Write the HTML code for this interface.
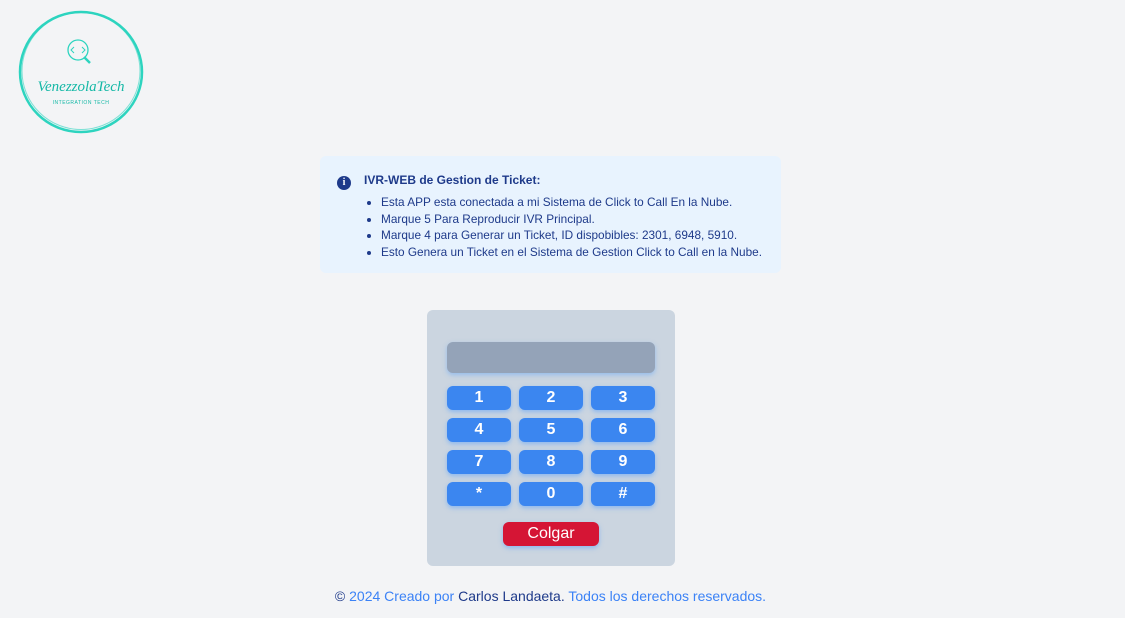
<!DOCTYPE html>
<html><head><meta charset="utf-8"><style>
*{margin:0;padding:0;box-sizing:border-box}
body{width:1125px;height:618px;background:#f3f4f6;font-family:"Liberation Sans",sans-serif;position:relative;overflow:hidden}
.logo{position:absolute;left:17px;top:9px;width:128px;height:126px}
.info{position:absolute;left:320px;top:156px;width:461px;height:117px;background:#e8f3fe;border-radius:6px;color:#1e3a8a}
.info .ic{position:absolute;left:17px;top:20px;width:14px;height:14px;border-radius:50%;background:#1e3a8a;color:#fff;font:bold 10px "Liberation Serif",serif;text-align:center;line-height:14px}
.info h4{position:absolute;left:44px;top:17px;font-size:12px;font-weight:bold}
.info ul{position:absolute;left:61px;top:38px;font-size:11.8px;line-height:16.5px}
.pad{position:absolute;left:427px;top:310px;width:248px;height:256px;background:#cbd5e0;border-radius:6px}
.disp{position:absolute;left:20px;top:32px;width:208px;height:31px;background:#94a3b8;border-radius:6px;box-shadow:0 2px 5px rgba(96,165,250,.5)}
.b{position:absolute;width:64px;height:24px;background:#3b86f0;border-radius:6px;color:#fff;font-weight:bold;font-size:16px;text-align:center;line-height:24px;box-shadow:0 2px 5px rgba(96,165,250,.6)}
.c{position:absolute;left:76px;top:212px;width:96px;height:24px;background:#d51535;border-radius:6px;color:#fff;font-size:16px;text-align:center;line-height:24px;box-shadow:0 2px 5px rgba(96,165,250,.6)}
.foot{position:absolute;left:0;width:1101px;top:588px;text-align:center;font-size:14px;color:#3b82f6}
.foot span{color:#1e3a8a}
</style></head><body>
<svg class="logo" viewBox="0 0 128 126">
<ellipse cx="64" cy="63" rx="61" ry="60" fill="none" stroke="#2dd4bf" stroke-width="2.5"/>
<ellipse cx="64" cy="62" rx="59" ry="58.5" fill="none" stroke="#2dd4bf" stroke-width="1" opacity=".6"/>
<circle cx="61" cy="41" r="10" fill="none" stroke="#2dd4bf" stroke-width="1.3"/>
<path d="M67 48 L73 54" stroke="#2dd4bf" stroke-width="2.5"/>
<path d="M57 38 l-3 3 3 3 M65 38 l3 3 -3 3" fill="none" stroke="#2dd4bf" stroke-width="1"/>
<text x="64" y="82" text-anchor="middle" font-family="Liberation Serif" font-style="italic" font-size="15" fill="#14b8a6">VenezzolaTech</text>
<text x="64" y="95" text-anchor="middle" font-family="Liberation Sans" font-size="5" fill="#14b8a6" letter-spacing=".5">INTEGRATION TECH</text>
</svg>
<div class="info"><div class="ic">i</div><h4>IVR-WEB de Gestion de Ticket:</h4>
<ul><li>Esta APP esta conectada a mi Sistema de Click to Call En la Nube.</li><li>Marque 5 Para Reproducir IVR Principal.</li><li>Marque 4 para Generar un Ticket, ID dispobibles: 2301, 6948, 5910.</li><li>Esto Genera un Ticket en el Sistema de Gestion Click to Call en la Nube.</li></ul></div>
<div class="pad"><div class="disp"></div>
<div class="b" style="left:20px;top:76px">1</div><div class="b" style="left:92px;top:76px">2</div><div class="b" style="left:164px;top:76px">3</div>
<div class="b" style="left:20px;top:108px">4</div><div class="b" style="left:92px;top:108px">5</div><div class="b" style="left:164px;top:108px">6</div>
<div class="b" style="left:20px;top:140px">7</div><div class="b" style="left:92px;top:140px">8</div><div class="b" style="left:164px;top:140px">9</div>
<div class="b" style="left:20px;top:172px">*</div><div class="b" style="left:92px;top:172px">0</div><div class="b" style="left:164px;top:172px">#</div>
<div class="c">Colgar</div></div>
<div class="foot"><span>©</span> 2024 Creado por <span>Carlos Landaeta.</span> Todos los derechos reservados.</div>
</body></html>
